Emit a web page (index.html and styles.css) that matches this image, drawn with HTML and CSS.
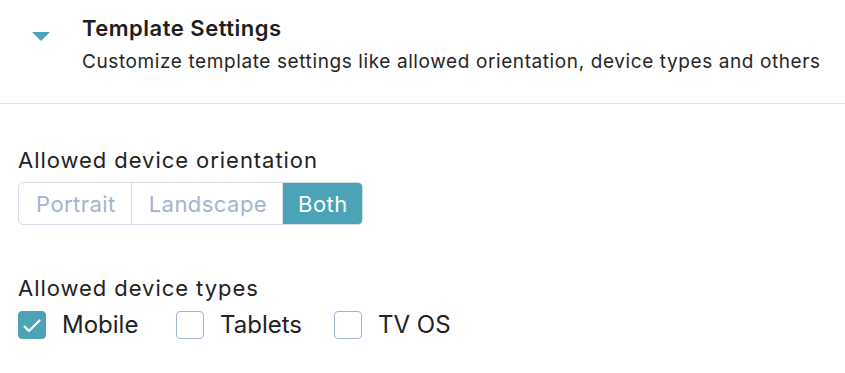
FILE: index.html
```html
<!DOCTYPE html>
<html>
<head>
<meta charset="utf-8">
<link rel="stylesheet" href="styles.css">
</head>
<body>
<div class="header">
  <div class="caret"></div>
  <div class="header-text">
    <div class="title">Template Settings</div>
    <div class="subtitle">Customize template settings like allowed orientation, device types and others</div>
  </div>
</div>
<div class="content">
  <div class="field">
    <div class="label">Allowed device orientation</div>
    <div class="segmented">
      <span class="seg">Portrait</span>
      <span class="seg">Landscape</span>
      <span class="seg active">Both</span>
    </div>
  </div>
  <div class="field types">
    <div class="label">Allowed device types</div>
    <div class="checks">
      <label class="check"><span class="box checked"><svg viewBox="0 0 28 28" width="28" height="28"><path d="M6.5 15.5L11 20 21.5 9.5" fill="none" stroke="#fff" stroke-width="2.2" stroke-linecap="round" stroke-linejoin="round"/></svg></span><span class="ctext">Mobile</span></label>
      <label class="check"><span class="box"></span><span class="ctext">Tablets</span></label>
      <label class="check"><span class="box"></span><span class="ctext">TV OS</span></label>
    </div>
  </div>
</div>
</body>
</html>
```
FILE: styles.css
```css
* { box-sizing: border-box; }
body {
  margin: 0;
  font-family: "Inter", "Noto Sans", sans-serif;
  color: #222;
  background: #fff;
}
.header {
  display: flex;
  align-items: flex-start;
  height: 104px;
  border-bottom: 1px solid #dfe1e6;
  padding-top: 14px;
}
.caret {
  width: 0;
  height: 0;
  margin: 18px 0 0 32px;
  border-left: 9px solid transparent;
  border-right: 9px solid transparent;
  border-top: 9px solid #4ba4b6;
}
.header-text {
  margin-left: 32px;
}
.title {
  font-size: 22px;
  font-weight: 600;
  line-height: 28px;
  letter-spacing: 0.5px;
  color: #1e1e1e;
}
.subtitle {
  margin-top: 6px;
  font-size: 19px;
  line-height: 28px;
  letter-spacing: 0.6px;
  color: #262626;
}
.content {
  padding: 42px 18px 0;
}
.label {
  font-size: 22px;
  line-height: 28px;
  letter-spacing: 0.95px;
  color: #222;
}
.segmented {
  display: inline-flex;
  margin-top: 8px;
  border: 1px solid #d6dcea;
  border-radius: 5px;
  overflow: hidden;
  height: 43px;
}
.seg {
  display: flex;
  align-items: center;
  padding: 0 15px 0 17px;
  font-size: 22px;
  letter-spacing: 0.45px;
  color: #a5b3d3;
  border-right: 1px solid #d6dcea;
}
.seg:last-child { border-right: none; }
.seg.active {
  padding: 0 14px 0 15px;
  background: #4ba4b6;
  color: #fff;
}
.types {
  margin-top: 49px;
}
.checks {
  display: grid;
  grid-auto-flow: column;
  grid-auto-columns: 158px;
  margin-top: 9px;
}
.check {
  display: flex;
  align-items: center;
  gap: 16px;
  line-height: 28px;
}
.box {
  flex: none;
  width: 28px;
  height: 28px;
  border: 1px solid #a5b3d3;
  border-radius: 4px;
  display: flex;
}
.box.checked {
  background: #4ba4b6;
  border-color: #4ba4b6;
}
.box svg { margin: -1px; }
.ctext {
  font-size: 24px;
  color: #222;
}
```
